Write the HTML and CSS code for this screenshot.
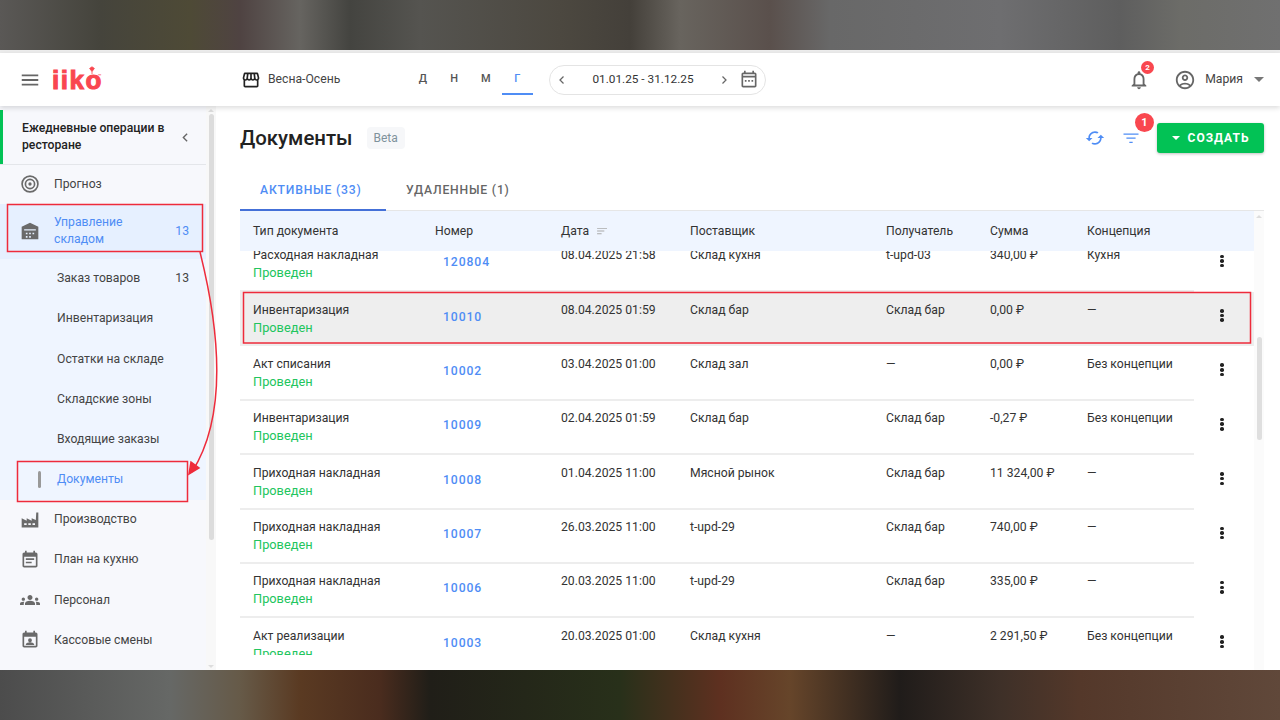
FILE: index.html
```html
<!DOCTYPE html>
<html lang="ru">
<head>
  <meta charset="UTF-8" />
  <meta name="viewport" content="width=device-width, initial-scale=1.0" />
  <title>Документы</title>
  <link rel="stylesheet" href="styles.css">
</head>
<body>
  <div class="photo-top"></div>

  <div class="app">
    <header class="topbar">
      <div class="brand">
        <svg class="menu-icon" viewBox="0 0 24 24"><path d="M3 18h18v-2H3v2zm0-5h18v-2H3v2zm0-7v2h18V6H3z"/></svg>
        <div class="logo">
          <span class="logo-text">iiko</span>
          <svg class="logo-leaf" viewBox="0 0 10 10"><path d="M5 10V7M2 3l3 4 3-4-3-2z"/></svg>
          <span class="logo-tm">™</span>
        </div>
      </div>
      <div class="store">
        <svg class="store-icon" viewBox="0 0 24 24"><path d="M21.9 8.89l-1.05-4.37c-.22-.9-1-1.52-1.91-1.52H5.05c-.9 0-1.69.63-1.9 1.52L2.1 8.89c-.24 1.02-.02 2.06.62 2.88.08.11.19.19.28.29V19c0 1.1.9 2 2 2h14c1.1 0 2-.9 2-2v-6.94c.09-.09.2-.18.28-.28.64-.82.87-1.87.62-2.89zm-2.99-3.9l1.05 4.37c.1.42.01.84-.25 1.17-.14.18-.44.47-.94.47-.61 0-1.14-.49-1.21-1.14L16.98 5l1.93-.01zM13 5h1.96l.54 4.52c.05.39-.07.78-.33 1.07-.22.26-.54.41-.95.41-.67 0-1.22-.59-1.22-1.31V5zM8.49 9.52L9.04 5H11v4.69c0 .72-.55 1.31-1.29 1.31-.34 0-.65-.15-.89-.41-.25-.29-.37-.68-.33-1.07zm-4.45-.16L5.05 5h1.97l-.58 4.86c-.08.65-.6 1.14-1.21 1.14-.49 0-.8-.29-.93-.47-.27-.32-.36-.75-.26-1.17zM5 19v-6.03c.08.01.15.03.23.03.87 0 1.66-.36 2.24-.95.6.6 1.4.95 2.31.95.87 0 1.65-.36 2.23-.93.59.57 1.39.93 2.29.93.84 0 1.64-.35 2.24-.95.58.59 1.37.95 2.24.95.08 0 .15-.02.23-.03V19H5z"/></svg>
        <span>Весна-Осень</span>
      </div>
      <div class="periods">
        <span class="period">Д</span>
        <span class="period">Н</span>
        <span class="period">М</span>
        <span class="period period-active">Г</span>
      </div>
      <div class="date-range">
        <svg class="chevron" viewBox="0 0 24 24"><path d="M15 5l-7 7 7 7"/></svg>
        <span class="date-text">01.01.25 - 31.12.25</span>
        <svg class="chevron" viewBox="0 0 24 24"><path d="M9 5l7 7-7 7"/></svg>
        <svg class="calendar-icon" viewBox="0 0 24 24"><path d="M19 3h-1V1h-2v2H8V1H6v2H5c-1.1 0-2 .9-2 2v14c0 1.1.9 2 2 2h14c1.1 0 2-.9 2-2V5c0-1.1-.9-2-2-2zm0 16H5V9h14v10zM5 7V5h14v2H5zm2 5h2v2H7v-2zm4 0h2v2h-2v-2zm4 0h2v2h-2v-2z"/></svg>
      </div>
      <div class="user-area">
        <div class="bell">
          <svg class="bell-icon" viewBox="0 0 24 24"><path d="M12 22c1.1 0 2-.9 2-2h-4c0 1.1.9 2 2 2zm6-6v-5c0-3.07-1.63-5.64-4.5-6.32V4c0-.83-.67-1.5-1.5-1.5s-1.5.67-1.5 1.5v.68C7.64 5.36 6 7.92 6 11v5l-2 2v1h16v-1l-2-2zm-2 1H8v-6c0-2.48 1.51-4.5 4-4.5s4 2.02 4 4.5v6z"/></svg>
          <span class="bell-badge">2</span>
        </div>
        <svg class="user-icon" viewBox="0 0 24 24"><path d="M12 2C6.48 2 2 6.48 2 12s4.48 10 10 10 10-4.48 10-10S17.52 2 12 2zM7.35 18.5C8.66 17.56 10.26 17 12 17s3.34.56 4.65 1.5c-1.31.94-2.91 1.5-4.65 1.5s-3.34-.56-4.65-1.5zm10.79-1.38C16.45 15.8 14.32 15 12 15s-4.45.8-6.14 2.12C4.7 15.73 4 13.95 4 12c0-4.42 3.58-8 8-8s8 3.58 8 8c0 1.95-.7 3.73-1.86 5.12zM12 6c-1.93 0-3.5 1.57-3.5 3.5S10.07 13 12 13s3.5-1.57 3.5-3.5S13.93 6 12 6zm0 5c-.83 0-1.5-.67-1.5-1.5S11.17 8 12 8s1.5.67 1.5 1.5S12.83 11 12 11z"/></svg>
        <span class="user-name">Мария</span>
        <span class="user-caret"></span>
      </div>
    </header>

    <div class="content">
      <aside class="sidebar">
        <nav class="side-nav">
          <div class="side-head">
            <span>Ежедневные операции в ресторане</span>
            <svg class="side-back" viewBox="0 0 24 24"><path d="M15 5l-7 7 7 7"/></svg>
          </div>
          <a class="side-item">
            <svg class="side-icon" viewBox="0 0 24 24"><circle cx="12" cy="12" r="9.5" class="ring"/><circle cx="12" cy="12" r="5.5" class="ring"/><circle cx="12" cy="12" r="2"/></svg>
            <span>Прогноз</span>
          </a>
          <a class="side-item side-item-open">
            <svg class="side-icon" viewBox="0 0 24 24"><path d="M12 2L2 7v15h20V7L12 2zM5 10h14v1.5H5V10zm2 4h2v2H7v-2zm4 0h2v2h-2v-2zm4 0h2v2h-2v-2zm-8 4h2v2H7v-2zm4 0h2v2h-2v-2z" fill-rule="evenodd"/></svg>
            <span class="side-label">Управление складом</span>
            <span class="side-count">13</span>
          </a>
          <div class="side-sub">
            <a class="sub-item"><span>Заказ товаров</span><span class="sub-count">13</span></a>
            <a class="sub-item">Инвентаризация</a>
            <a class="sub-item">Остатки на складе</a>
            <a class="sub-item">Складские зоны</a>
            <a class="sub-item">Входящие заказы</a>
            <a class="sub-item sub-item-active"><span class="sub-mark"></span>Документы</a>
          </div>
          <a class="side-item">
            <svg class="side-icon" viewBox="0 0 24 24"><path d="M2 21V10l6 3V10l6 3V10l5 2 .5-9H22v18H2zm3-5v2h3v-2H5zm5 0v2h3v-2h-3zm5 0v2h3v-2h-3z" fill-rule="evenodd"/></svg>
            <span>Производство</span>
          </a>
          <a class="side-item">
            <svg class="side-icon" viewBox="0 0 24 24"><path d="M17 10H7v2h10v-2zm2-7h-1V1h-2v2H8V1H6v2H5c-1.11 0-1.99.9-1.99 2L3 19c0 1.1.89 2 2 2h14c1.1 0 2-.9 2-2V5c0-1.1-.9-2-2-2zm0 16H5V8h14v11zm-5-5H7v2h7v-2z"/></svg>
            <span>План на кухню</span>
          </a>
          <a class="side-item">
            <svg class="side-icon" viewBox="0 0 24 24"><path d="M12 12.75c1.63 0 3.07.39 4.24.9 1.08.48 1.76 1.56 1.76 2.73V18H6v-1.61c0-1.18.68-2.26 1.76-2.73 1.17-.52 2.61-.91 4.24-.91zM4 13c1.1 0 2-.9 2-2s-.9-2-2-2-2 .9-2 2 .9 2 2 2zm1.13 1.1c-.37-.06-.74-.1-1.13-.1-.99 0-1.93.21-2.78.58C.48 14.9 0 15.62 0 16.43V18h4.5v-1.61c0-.83.23-1.61.63-2.29zM20 13c1.1 0 2-.9 2-2s-.9-2-2-2-2 .9-2 2 .9 2 2 2zm4 3.43c0-.81-.48-1.53-1.22-1.85-.85-.37-1.79-.58-2.78-.58-.39 0-.76.04-1.13.1.4.68.63 1.46.63 2.29V18H24v-1.57zM12 6c1.66 0 3 1.34 3 3s-1.34 3-3 3-3-1.34-3-3 1.34-3 3-3z"/></svg>
            <span>Персонал</span>
          </a>
          <a class="side-item">
            <svg class="side-icon" viewBox="0 0 24 24"><path d="M19 3h-1V1h-2v2H8V1H6v2H5c-1.1 0-2 .9-2 2v14c0 1.1.9 2 2 2h14c1.1 0 2-.9 2-2V5c0-1.1-.9-2-2-2zm0 16H5V8h14v11zM12 10a2.3 2.3 0 1 1 0 4.6 2.3 2.3 0 0 1 0-4.6zm-5 8v-.8c0-1.6 3.3-2.4 5-2.4s5 .8 5 2.4v.8H7z"/></svg>
            <span>Кассовые смены</span>
          </a>
        </nav>
        <div class="side-scroll">
          <span class="arrow-up"></span>
          <div class="side-thumb"></div>
          <span class="arrow-down"></span>
        </div>
      </aside>

      <main class="main">
        <div class="page-head">
          <h1 class="page-title">Документы</h1>
          <span class="beta">Beta</span>
          <div class="page-actions">
            <svg class="action-icon" viewBox="0 0 24 24"><path d="M19 8l-4 4h3c0 3.31-2.69 6-6 6-1.01 0-1.97-.25-2.8-.7l-1.46 1.46C8.97 19.54 10.43 20 12 20c4.42 0 8-3.58 8-8h3l-4-4zM6 12c0-3.31 2.69-6 6-6 1.01 0 1.97.25 2.8.7l1.46-1.46C15.03 4.46 13.57 4 12 4c-4.42 0-8 3.58-8 8H1l4 4 4-4H6z"/></svg>
            <div class="filter">
              <svg class="action-icon" viewBox="0 0 24 24"><path d="M3 6.5h18V8H3zM6.5 11.5h11V13h-11zM10 16.5h4V18h-4z"/></svg>
              <span class="filter-badge">1</span>
            </div>
            <button class="create-button"><span class="create-caret"></span>Создать</button>
          </div>
        </div>

        <div class="tabs">
          <span class="tab tab-active">Активные (33)</span>
          <span class="tab">Удаленные (1)</span>
        </div>

        <div class="table-area">
          <div class="table">
            <div class="table-head">
              <span>Тип документа</span>
              <span>Номер</span>
              <span class="head-date">Дата
                <svg class="sort-icon" viewBox="0 0 12 10"><path d="M0 1h11v1H0zM0 4h8v1H0zM0 7h5v1H0z"/></svg>
              </span>
              <span>Поставщик</span>
              <span>Получатель</span>
              <span>Сумма</span>
              <span>Концепция</span>
            </div>
            <div class="table-body">
              <div class="rows">
                <div class="row row-first">
                  <div class="cells">
                    <div><div>Расходная накладная</div><div class="status">Проведен</div></div>
                    <a class="number">120804</a><div>08.04.2025 21:58</div><div>Склад кухня</div><div>t-upd-03</div><div>340,00 ₽</div><div>Кухня</div>
                  </div>
                  <div class="dots"><i></i><i></i><i></i></div>
                </div>
                <div class="row row-marked">
                  <div class="cells">
                    <div><div>Инвентаризация</div><div class="status">Проведен</div></div>
                    <a class="number">10010</a><div>08.04.2025 01:59</div><div>Склад бар</div><div>Склад бар</div><div>0,00 ₽</div><div>—</div>
                  </div>
                  <div class="dots"><i></i><i></i><i></i></div>
                </div>
                <div class="row">
                  <div class="cells">
                    <div><div>Акт списания</div><div class="status">Проведен</div></div>
                    <a class="number">10002</a><div>03.04.2025 01:00</div><div>Склад зал</div><div>—</div><div>0,00 ₽</div><div>Без концепции</div>
                  </div>
                  <div class="dots"><i></i><i></i><i></i></div>
                </div>
                <div class="row">
                  <div class="cells">
                    <div><div>Инвентаризация</div><div class="status">Проведен</div></div>
                    <a class="number">10009</a><div>02.04.2025 01:59</div><div>Склад бар</div><div>Склад бар</div><div>-0,27 ₽</div><div>Без концепции</div>
                  </div>
                  <div class="dots"><i></i><i></i><i></i></div>
                </div>
                <div class="row">
                  <div class="cells">
                    <div><div>Приходная накладная</div><div class="status">Проведен</div></div>
                    <a class="number">10008</a><div>01.04.2025 11:00</div><div>Мясной рынок</div><div>Склад бар</div><div>11 324,00 ₽</div><div>—</div>
                  </div>
                  <div class="dots"><i></i><i></i><i></i></div>
                </div>
                <div class="row">
                  <div class="cells">
                    <div><div>Приходная накладная</div><div class="status">Проведен</div></div>
                    <a class="number">10007</a><div>26.03.2025 11:00</div><div>t-upd-29</div><div>Склад бар</div><div>740,00 ₽</div><div>—</div>
                  </div>
                  <div class="dots"><i></i><i></i><i></i></div>
                </div>
                <div class="row">
                  <div class="cells">
                    <div><div>Приходная накладная</div><div class="status">Проведен</div></div>
                    <a class="number">10006</a><div>20.03.2025 11:00</div><div>t-upd-29</div><div>Склад бар</div><div>335,00 ₽</div><div>—</div>
                  </div>
                  <div class="dots"><i></i><i></i><i></i></div>
                </div>
                <div class="row">
                  <div class="cells">
                    <div><div>Акт реализации</div><div class="status">Проведен</div></div>
                    <a class="number">10003</a><div>20.03.2025 01:00</div><div>Склад кухня</div><div>—</div><div>2 291,50 ₽</div><div>Без концепции</div>
                  </div>
                  <div class="dots"><i></i><i></i><i></i></div>
                </div>
              </div>
            </div>
          </div>
          <div class="table-scroll">
            <span class="arrow-up"></span>
            <div class="table-thumb"></div>
          </div>
        </div>
      </main>
    </div>
  </div>

  <div class="photo-bottom"></div>

  <!-- red marks drawn over the screenshot -->
  <svg class="marks" viewBox="0 0 1280 720">
    <rect x="7.5" y="204.5" width="195" height="47"/>
    <rect x="17.5" y="461.5" width="170" height="40"/>
    <rect x="243.5" y="292.5" width="1007" height="50.5"/>
    <path d="M200 252C222 340 225 420 192 472"/>
    <path class="mark-head" d="M189 474l2-12 8 6z"/>
  </svg>
</body>
</html>
```

FILE: styles.css
```css
* {
  box-sizing: border-box;
}

body {
  margin: 0;
  width: 1280px;
  height: 720px;
  overflow: hidden;
  position: relative;
  background: #fff;
  color: #333;
  font-family: Roboto, "Liberation Sans", sans-serif;
  font-size: 12.2px;
  line-height: 17px;
}

.photo-top {
  height: 50px;
  background: linear-gradient(90deg, #5a5856 0, #45443c 100px, #4e4a36 190px, #4f4342 240px, #666460 300px, #444440 350px, #555450 420px, #4c4840 560px, #44403a 630px, #68645e 680px, #5a504c 770px, #686868 830px, #6e6e70 1000px, #5e5e5e 1120px, #6c6c68 1180px, #707070 1280px);
}

.photo-bottom {
  height: 50px;
  background: linear-gradient(90deg, #4c4c4c 0, #666866 170px, #665a48 240px, #5a3a22 300px, #4a2c1e 380px, #201e18 430px, #28301a 620px, #5e3020 720px, #66452a 790px, #201c1a 900px, #3e3028 1000px, #54382a 1080px, #60483a 1280px);
}

.app {
  height: 620px;
  display: flex;
  flex-direction: column;
  border-top: 3px solid #ececec;
}

/* top bar */
.topbar {
  height: 53px;
  flex: none;
  display: flex;
  align-items: center;
  background: #fff;
  box-shadow: 0 2px 5px rgba(0, 0, 0, 0.14);
  position: relative;
  z-index: 2;
}

.brand {
  width: 241px;
  display: flex;
  align-items: center;
  padding-left: 19px;
  gap: 11px;
}

.menu-icon {
  width: 22px;
  height: 22px;
  fill: #666;
}

.logo {
  display: flex;
  position: relative;
  width: 52px;
  height: 24px;
}

.logo-text {
  font-family: "Liberation Sans", sans-serif;
  font-weight: 700;
  font-size: 26px;
  line-height: 24px;
  letter-spacing: 1.5px;
  color: #f9474f;
  -webkit-text-stroke: 1px #f9474f;
}

.logo-leaf {
  position: absolute;
  left: 36px;
  top: -2px;
  width: 8px;
  height: 8px;
  fill: #f9474f;
  stroke: #f9474f;
}

.logo-tm {
  position: absolute;
  left: 46px;
  top: 4px;
  font-size: 6px;
  line-height: 7px;
  color: #f9474f;
}

.store {
  width: 166px;
  display: flex;
  align-items: center;
  gap: 7px;
  color: #444;
}

.store-icon {
  width: 20px;
  height: 20px;
  fill: #222;
}

.periods {
  width: 142px;
  display: flex;
  height: 30px;
}

.period {
  width: 31.5px;
  text-align: center;
  font-size: 11px;
  font-weight: 500;
  line-height: 28px;
  color: #555;
}

.period-active {
  color: #4f8df5;
  border-bottom: 2px solid #4f8df5;
}

.date-range {
  width: 217px;
  height: 30px;
  display: flex;
  align-items: center;
  padding: 0 6px;
  border: 1px solid #e4e4e4;
  border-radius: 15px;
}

.chevron {
  width: 12px;
  height: 12px;
  flex: none;
  fill: none;
  stroke: #666;
  stroke-width: 2.5;
}

.date-text {
  width: 153px;
  text-align: center;
  font-size: 11.8px;
  color: #333;
  white-space: nowrap;
}

.calendar-icon {
  width: 20px;
  height: 20px;
  margin-left: 9px;
  flex: none;
  fill: #666;
}

.user-area {
  margin-left: auto;
  display: flex;
  align-items: center;
  padding-right: 16px;
}

.bell {
  position: relative;
  width: 22px;
  height: 22px;
}

.bell-icon {
  width: 22px;
  height: 22px;
  fill: #666;
  display: block;
}

.bell-badge {
  position: absolute;
  left: 13px;
  top: -8px;
  width: 13px;
  height: 13px;
  border-radius: 50%;
  background: #f9474f;
  color: #fff;
  font-size: 8px;
  font-weight: 700;
  line-height: 13px;
  text-align: center;
}

.user-icon {
  width: 22px;
  height: 22px;
  margin-left: 24px;
  fill: #666;
}

.user-name {
  margin-left: 9px;
  color: #444;
}

.user-caret {
  margin-left: 11px;
  border-left: 5px solid transparent;
  border-right: 5px solid transparent;
  border-top: 5px solid #777;
}

/* sidebar */
.content {
  flex: 1;
  display: flex;
  min-height: 0;
}

.sidebar {
  width: 216px;
  flex: none;
  display: flex;
  background: #f7f8fc;
}

.side-nav {
  width: 206px;
  flex: none;
  padding-top: 4px;
}

.side-head {
  height: 54px;
  display: flex;
  align-items: center;
  justify-content: space-between;
  padding: 0 14px 0 19px;
  color: #222;
  font-weight: 500;
  border-left: 3px solid #02c255;
  box-shadow: 0 1px 0 #e4e6ea;
}

.side-head span {
  width: 150px;
}

.side-back {
  width: 13px;
  height: 13px;
  flex: none;
  fill: none;
  stroke: #666;
  stroke-width: 2.5;
}

.side-item {
  height: 40.2px;
  display: flex;
  align-items: center;
  padding-left: 20px;
  color: #444;
}

.side-icon {
  width: 20px;
  height: 20px;
  margin-right: 14px;
  flex: none;
  fill: #6a6a6a;
}

.side-icon .ring {
  fill: none;
  stroke: #6a6a6a;
  stroke-width: 2;
}

.side-item-open {
  height: 54.4px;
  background: #e6f0ff;
  color: #4f8df5;
}

.side-label {
  width: 90px;
}

.side-count {
  margin-left: auto;
  margin-right: 17px;
}

.side-sub {
  background: #eff5ff;
}

.sub-item {
  height: 40.2px;
  display: flex;
  align-items: center;
  justify-content: space-between;
  padding: 0 17px 0 57px;
  color: #444;
}

.sub-item-active {
  justify-content: flex-start;
  color: #4f8df5;
  position: relative;
}

.sub-mark {
  position: absolute;
  left: 38px;
  top: 11px;
  width: 3px;
  height: 17px;
  border-radius: 2px;
  background: #999;
}

.side-scroll {
  width: 10px;
  flex: none;
  display: flex;
  flex-direction: column;
  align-items: center;
  padding-top: 3px;
  background: #f8f8f8;
}

.side-thumb {
  width: 5px;
  height: 426px;
  margin-top: 2px;
  border-radius: 3px;
  background: #dcdcdc;
}

.arrow-up,
.arrow-down {
  border-left: 3px solid transparent;
  border-right: 3px solid transparent;
}

.arrow-up {
  border-bottom: 3px solid #ddd;
}

.arrow-down {
  border-top: 3px solid #ddd;
  margin-top: auto;
  margin-bottom: 2px;
}

/* main */
.main {
  flex: 1;
  min-width: 0;
  background: #fff;
  padding: 0 16px 0 24px;
  display: flex;
  flex-direction: column;
}

.page-head {
  height: 64px;
  flex: none;
  display: flex;
  align-items: center;
}

.page-title {
  margin: 0;
  font-size: 20.4px;
  line-height: 24px;
  font-weight: 500;
  color: #222;
}

.beta {
  margin-left: 14px;
  padding: 3px 7px;
  border-radius: 4px;
  background: #f6f7f9;
  color: #7f929c;
  font-size: 12px;
  line-height: 16px;
}

.page-actions {
  margin-left: auto;
  display: flex;
  align-items: center;
}

.action-icon {
  width: 20px;
  height: 20px;
  fill: #4f8df5;
  display: block;
}

.filter {
  position: relative;
  margin-left: 16px;
}

.filter-badge {
  position: absolute;
  left: 14px;
  top: -15px;
  width: 19px;
  height: 19px;
  border-radius: 50%;
  background: #f9474f;
  color: #fff;
  font-size: 11px;
  font-weight: 700;
  line-height: 19px;
  text-align: center;
}

.create-button {
  margin-left: 16px;
  width: 107px;
  height: 30px;
  display: flex;
  align-items: center;
  justify-content: center;
  gap: 8px;
  border: none;
  border-radius: 3px;
  background: #02c255;
  box-shadow: 0 1px 3px rgba(0, 0, 0, 0.25);
  color: #fff;
  font-family: inherit;
  font-size: 12px;
  font-weight: 700;
  letter-spacing: 1px;
  text-transform: uppercase;
}

.create-caret {
  border-left: 4px solid transparent;
  border-right: 4px solid transparent;
  border-top: 4px solid #fff;
}

.tabs {
  height: 41px;
  flex: none;
  display: flex;
  border-bottom: 1px solid #e6e6e6;
}

.tab {
  padding: 12px 20px 0;
  font-weight: 500;
  letter-spacing: 0.8px;
  text-transform: uppercase;
  white-space: nowrap;
  color: #666;
}

.tab-active {
  width: 146px;
  height: 41px;
  color: #4f8df5;
  border-bottom: 2px solid #4470d8;
}

.table-area {
  flex: 1;
  min-height: 0;
  display: flex;
  padding-bottom: 15px;
}

.table {
  width: 1014px;
  flex: none;
  display: flex;
  flex-direction: column;
}

.table-head,
.cells {
  display: grid;
  grid-template-columns: 182px 126px 129px 196px 104px 97px 107px;
}

.table-head {
  height: 40px;
  flex: none;
  align-items: center;
  padding-left: 13px;
  background: #eff5ff;
  color: #333;
}

.head-date {
  display: flex;
  align-items: center;
  gap: 8px;
}

.sort-icon {
  width: 11px;
  height: 9px;
  fill: #aaa;
}

.table-body {
  flex: 1;
  min-height: 0;
  overflow: hidden;
}

.rows {
  margin-top: -13.4px;
}

.row {
  height: 54.4px;
  display: flex;
}

.row-marked {
  background: #eee;
}

.cells {
  width: 954px;
  flex: none;
  padding: 9.5px 0 0 13px;
  border-bottom: 2px solid #ededed;
}

.row-marked .cells {
  border-bottom-color: #eee;
}

.status {
  font-size: 12.8px;
  color: #22c55e;
}

.number {
  margin-left: 8px;
  padding-top: 7px;
  font-weight: 500;
  letter-spacing: 0.9px;
  color: #4f8df5;
}

.dots {
  flex: 1;
  display: flex;
  flex-direction: column;
  align-items: center;
  padding: 17px 4px 0 0;
  gap: 1.2px;
}

.dots i {
  width: 3.5px;
  height: 3.5px;
  border-radius: 50%;
  background: #222;
}

.table-scroll {
  flex: 1;
  display: flex;
  flex-direction: column;
  align-items: center;
  padding-top: 4px;
  background: #fbfbfb;
  margin-bottom: -15px;
}

.table-thumb {
  width: 5px;
  height: 103px;
  margin-top: 119px;
  border-radius: 3px;
  background: #dfdfdf;
}

/* red marks */
.marks {
  position: absolute;
  left: 0;
  top: 0;
  width: 1280px;
  height: 720px;
  pointer-events: none;
  z-index: 5;
  fill: none;
  stroke: #ee2b3b;
  stroke-width: 1.5;
}

.mark-head {
  fill: #ee2b3b;
}
```
